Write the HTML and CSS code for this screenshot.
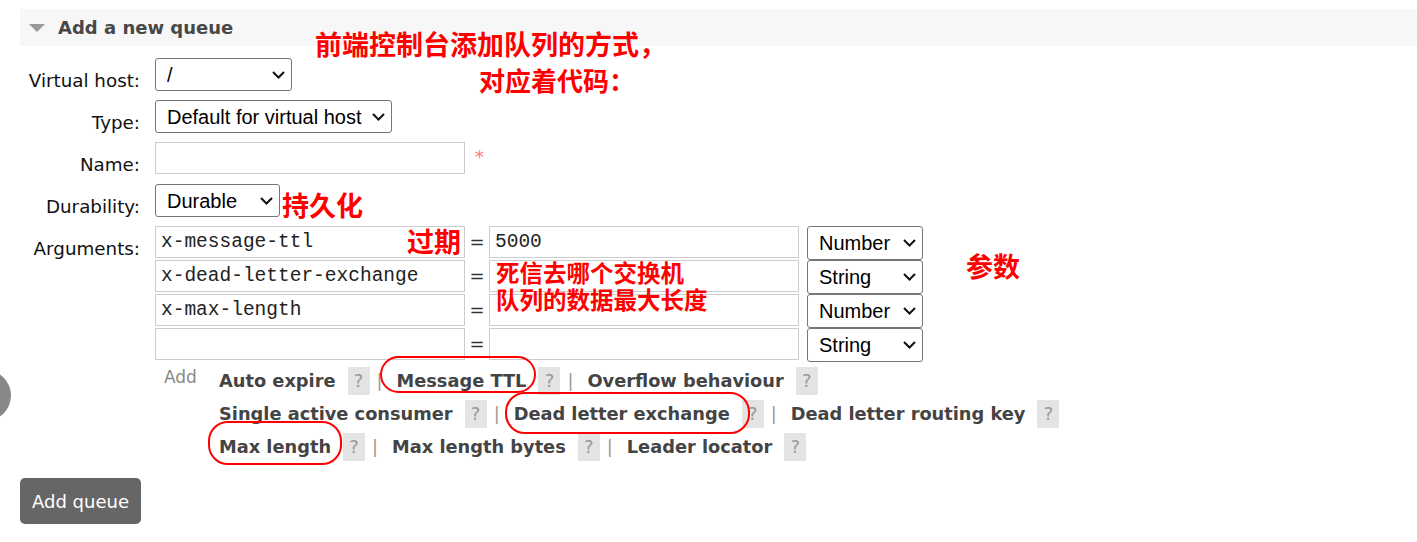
FILE: index.html
```html
<!DOCTYPE html>
<html lang="zh-CN">
<head>
  <meta charset="UTF-8">
  <title>Add a new queue</title>
  <link rel="stylesheet" href="styles.css">
</head>
<body>

<div class="page">
  <div class="section-head">
    <span class="toggle"></span>
    <h2>Add a new queue</h2>
  </div>

  <form class="queue-form">
    <label class="field-label">Virtual host:</label>
    <div class="field">
      <span class="sel-wrap">
        <select class="sel sel-vhost"><option>/</option></select>
        <svg class="chev" viewBox="0 0 13 8"><path d="M1 1l5.5 5.5L12 1"/></svg>
      </span>
    </div>

    <label class="field-label">Type:</label>
    <div class="field">
      <span class="sel-wrap">
        <select class="sel sel-type"><option>Default for virtual host</option></select>
        <svg class="chev" viewBox="0 0 13 8"><path d="M1 1l5.5 5.5L12 1"/></svg>
      </span>
    </div>

    <label class="field-label">Name:</label>
    <div class="field">
      <input type="text" class="txt txt-name">
      <span class="mand">*</span>
    </div>

    <label class="field-label">Durability:</label>
    <div class="field">
      <span class="sel-wrap">
        <select class="sel sel-durable"><option>Durable</option></select>
        <svg class="chev" viewBox="0 0 13 8"><path d="M1 1l5.5 5.5L12 1"/></svg>
      </span>
    </div>

    <label class="field-label">Arguments:</label>
    <div class="field field-args">
      <div class="arg-row">
        <input type="text" class="txt mono" value="x-message-ttl">
        <span class="eq">=</span>
        <input type="text" class="txt mono" value="5000">
        <span class="sel-wrap">
          <select class="sel sel-argtype"><option>Number</option></select>
          <svg class="chev" viewBox="0 0 13 8"><path d="M1 1l5.5 5.5L12 1"/></svg>
        </span>
      </div>
      <div class="arg-row">
        <input type="text" class="txt mono" value="x-dead-letter-exchange">
        <span class="eq">=</span>
        <input type="text" class="txt mono">
        <span class="sel-wrap">
          <select class="sel sel-argtype"><option>String</option></select>
          <svg class="chev" viewBox="0 0 13 8"><path d="M1 1l5.5 5.5L12 1"/></svg>
        </span>
      </div>
      <div class="arg-row">
        <input type="text" class="txt mono" value="x-max-length">
        <span class="eq">=</span>
        <input type="text" class="txt mono">
        <span class="sel-wrap">
          <select class="sel sel-argtype"><option>Number</option></select>
          <svg class="chev" viewBox="0 0 13 8"><path d="M1 1l5.5 5.5L12 1"/></svg>
        </span>
      </div>
      <div class="arg-row">
        <input type="text" class="txt mono">
        <span class="eq">=</span>
        <input type="text" class="txt mono">
        <span class="sel-wrap">
          <select class="sel sel-argtype"><option>String</option></select>
          <svg class="chev" viewBox="0 0 13 8"><path d="M1 1l5.5 5.5L12 1"/></svg>
        </span>
      </div>

      <div class="arg-links">
        <span class="add-label">Add</span>
        <div class="link-rows">
          <div class="link-row">
            <span class="arg-link">Auto expire</span><span class="help">?</span><span class="sep">|</span>
            <span class="arg-link">Message TTL</span><span class="help">?</span><span class="sep">|</span>
            <span class="arg-link">Overflow behaviour</span><span class="help">?</span>
          </div>
          <div class="link-row">
            <span class="arg-link">Single active consumer</span><span class="help">?</span><span class="sep">|</span>
            <span class="arg-link">Dead letter exchange</span><span class="help">?</span><span class="sep">|</span>
            <span class="arg-link">Dead letter routing key</span><span class="help">?</span>
          </div>
          <div class="link-row">
            <span class="arg-link">Max length</span><span class="help">?</span><span class="sep">|</span>
            <span class="arg-link">Max length bytes</span><span class="help">?</span><span class="sep">|</span>
            <span class="arg-link">Leader locator</span><span class="help">?</span>
          </div>
        </div>
      </div>
    </div>
  </form>

  <button class="add-btn">Add queue</button>
</div>

<!-- 批注 -->
<div class="note note-title1">前端控制台添加队列的方式，</div>
<div class="note note-title2">对应着代码：</div>
<div class="note note-durable">持久化</div>
<div class="note note-ttl">过期</div>
<div class="note note-small note-dlx">死信去哪个交换机</div>
<div class="note note-small note-maxlen">队列的数据最大长度</div>
<div class="note note-args">参数</div>

<div class="ring ring-ttl"></div>
<div class="ring ring-dlx"></div>
<div class="ring ring-max"></div>

<div class="side-dot"></div>

</body>
</html>
```

FILE: styles.css
```css
body {
  margin: 0;
  font-family: "DejaVu Sans", Verdana, sans-serif;
  font-size: 18px;
  color: #111;
  background: #fff;
  overflow: hidden;
}

.page {
  padding: 9px 0 0 20px;
}

/* 标题栏 */
.section-head {
  display: flex;
  align-items: center;
  height: 37px;
  background: #f7f7f7;
  padding-left: 9px;
}

.toggle {
  width: 0;
  height: 0;
  border-left: 8px solid transparent;
  border-right: 8px solid transparent;
  border-top: 8px solid #999;
  margin-right: 13px;
}

.section-head h2 {
  margin: 0;
  font-size: 18px;
  font-weight: bold;
  color: #484848;
}

/* 表单 */
.queue-form {
  display: grid;
  grid-template-columns: 120px auto;
  column-gap: 15px;
  row-gap: 9px;
  justify-content: start;
  margin-top: 12px;
}

.field-label {
  text-align: right;
  padding-top: 12px;
  line-height: 21px;
  font-size: 18.3px;
}

.field {
  display: flex;
  align-items: flex-start;
}

.sel-wrap {
  position: relative;
  display: inline-flex;
}

.sel {
  -webkit-appearance: none;
  appearance: none;
  font-family: "Liberation Sans", Arial, sans-serif;
  font-size: 20px;
  color: #000;
  height: 33px;
  padding: 0 24px 0 11px;
  border: 1px solid #767676;
  border-radius: 3px;
  background: #fff;
}

.chev {
  position: absolute;
  right: 7px;
  top: 50%;
  width: 13px;
  height: 8px;
  margin-top: -4px;
  fill: none;
  stroke: #111;
  stroke-width: 2;
  pointer-events: none;
}

.sel-vhost { width: 137px; }
.sel-type { width: 237px; }
.sel-durable { width: 125px; }
.sel-argtype { width: 116px; height: 34px; }

.arg-row .sel-wrap { margin-left: 8px; }

.txt {
  box-sizing: border-box;
  width: 310px;
  height: 32px;
  border: 1px solid #ccc;
  border-radius: 0;
  padding: 0 5px;
  margin: 0;
  background: #fff;
}

.mono {
  font-family: "Liberation Mono", "Courier New", monospace;
  font-size: 19.5px;
  color: #222;
}

.mand {
  color: #f77;
  font-size: 18px;
  margin-left: 10px;
  padding-top: 4px;
}

/* 参数 */
.field-args {
  flex-direction: column;
}

.arg-row {
  display: flex;
  align-items: flex-start;
  height: 34px;
}

.eq {
  width: 24px;
  text-align: center;
  line-height: 32px;
  color: #333;
}

.arg-links {
  display: flex;
  margin-top: 2px;
}

.add-label {
  width: 55px;
  padding-left: 9px;
  color: #888;
  font-size: 17px;
  line-height: 26px;
}

.link-row {
  display: flex;
  align-items: center;
  height: 33px;
  font-size: 17.8px;
}

.arg-link {
  font-weight: bold;
  color: #444;
  margin-right: 12px;
}

.help {
  display: inline-block;
  width: 22px;
  height: 28px;
  line-height: 28px;
  text-align: center;
  background: #e4e4e4;
  color: #999;
  font-size: 18px;
}

.sep {
  color: #999;
  margin: 0 14px 0 7px;
}

.add-btn {
  margin-top: 15px;
  width: 121px;
  height: 46px;
  border: none;
  border-radius: 5px;
  background: #666;
  color: #fff;
  font-family: "DejaVu Sans", Verdana, sans-serif;
  font-size: 18px;
  padding: 0;
}

/* 红色批注 */
.note {
  position: absolute;
  font-family: "Noto Sans CJK SC", sans-serif;
  font-weight: 700;
  font-size: 27px;
  line-height: 1;
  color: #f00;
  white-space: nowrap;
}

.note-small { font-size: 23.5px; }

.note-title1 { left: 315px; top: 30px; }
.note-title2 { left: 479px; top: 67px; font-size: 26px; }
.note-durable { left: 282px; top: 191px; }
.note-ttl { left: 407px; top: 227px; }
.note-dlx { left: 496px; top: 261px; }
.note-maxlen { left: 496px; top: 288px; }
.note-args { left: 966px; top: 252px; }

.ring {
  position: absolute;
  box-sizing: border-box;
  border: 2.5px solid #f00;
  border-radius: 20px;
}

.ring-ttl { left: 380px; top: 356px; width: 156px; height: 37px; }
.ring-dlx { left: 505px; top: 392px; width: 245px; height: 42px; }
.ring-max { left: 208px; top: 421px; width: 134px; height: 44px; }

.side-dot {
  position: absolute;
  left: -40px;
  top: 370px;
  width: 51px;
  height: 51px;
  border-radius: 50%;
  background: #888;
}
```
